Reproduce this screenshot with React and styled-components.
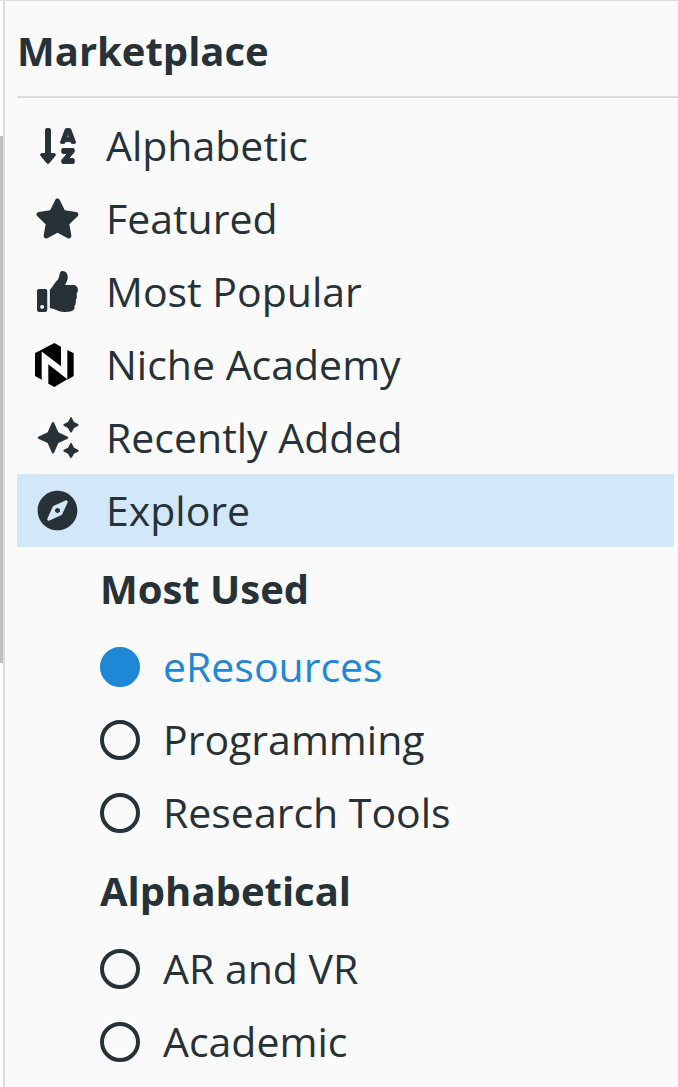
import React, { useState } from 'react'
import styled, { createGlobalStyle, ThemeProvider } from 'styled-components'
import { FaCompass, FaSortAlphaDown, FaStar, FaThumbsUp } from 'react-icons/fa'

const theme = {
    background: '#fafafa',
    text: '#263238',
    accent: '#1e88d6',
    selected: '#d2e7f8',
    border: '#dcdcdc',
    thumb: '#c1c1c1',
}

const GlobalStyle = createGlobalStyle`
    * {
        box-sizing: border-box;
    }
    body {
        margin: 0;
        background-color: ${({ theme }) => theme.background};
        color: ${({ theme }) => theme.text};
        font-family: "Open Sans", "Noto Sans", sans-serif;
        font-size: 41px;
    }
`
const Page = styled.div`
    min-height: 100vh;
    display: flex;
    border-top: 1px solid ${({ theme }) => theme.border};
`
const ScrollGutter = styled.div`
    width: 3px;
    padding-top: 135px;
    flex-shrink: 0;
    background-color: white;
`
const ScrollThumb = styled.div`
    height: 527px;
    background-color: ${({ theme }) => theme.thumb};
`
const Sidebar = styled.aside`
    flex: 1;
    min-width: 0;
    padding-left: 12px;
    border-left: 2px solid ${({ theme }) => theme.border};
`
const Title = styled.h1`
    margin: 0 0 11px;
    padding: 20px 0 15px;
    border-bottom: 2px solid ${({ theme }) => theme.border};
    font-size: 40px;
    font-weight: 700;
    line-height: 60px;
`
const Menu = styled.nav`
    display: flex;
    flex-direction: column;
    margin-right: 4px;
`
const MenuLink = styled.a`
    height: 73px;
    padding-left: 18px;
    display: flex;
    align-items: center;
    gap: 26px;
    color: inherit;
    text-decoration: none;
    background-color: ${({ theme, $active }) => $active ? theme.selected : 'transparent'};
`
const MenuIcon = styled.span`
    width: 45px;
    display: flex;
    justify-content: center;
    flex-shrink: 0;
    svg {
        display: block;
    }
`
const ItemText = styled.span`
    padding-bottom: 2px;
`
const Filters = styled.form`
    padding-left: 83px;
`
const FilterGroup = styled.fieldset`
    margin: 0;
    padding: 0;
    border: 0;
    min-width: 0;
`
const FilterTitle = styled.legend`
    padding: 0;
    font-size: 40px;
    font-weight: 700;
    line-height: 83px;
`
const FilterOption = styled.label`
    height: 73px;
    display: flex;
    align-items: center;
    gap: 23px;
    cursor: pointer;
    color: ${({ theme, $checked }) => $checked ? theme.accent : theme.text};
`
const Radio = styled.input`
    appearance: none;
    width: 40px;
    height: 40px;
    margin: 0;
    flex-shrink: 0;
    border: 4px solid ${({ theme }) => theme.text};
    border-radius: 50%;
    cursor: pointer;
    &:checked {
        border-color: ${({ theme }) => theme.accent};
        background-color: ${({ theme }) => theme.accent};
    }
`

const NicheLogo = () => (
    <svg width="45" height="44" viewBox="0 0 135 132" aria-hidden="true">
        <path d="M0 30 20 20V110L0 99Z" />
        <path d="M18 21 58 0 78 11V70L18 24Z" />
        <path d="M97 21 116 31V99L97 110Z" />
        <path d="M40 64 97 109 58 132 40 122Z" />
    </svg>
)

const Sparkles = () => (
    <svg width="42" height="42" viewBox="0 0 126 126" fill="currentColor" aria-hidden="true">
        <path d="M48 15Q50 15 52 19L64 46 92 59Q96 62 92 65L64 78 52 106Q48 113 44 106L32 78 4 65Q0 62 4 59L32 46 44 19Q46 15 48 15Z" />
        <path d="M102 0Q104 0 105 4L111 15 123 21Q127 24 123 27L111 33 105 44Q102 49 99 44L93 33 81 27Q77 24 81 21L93 15 99 4Q100 0 102 0Z" />
        <path d="M102 77Q104 77 105 81L111 92 123 98Q127 101 123 104L111 110 105 121Q102 126 99 121L93 110 81 104Q77 101 81 98L93 92 99 81Q100 77 102 77Z" />
    </svg>
)

const menuItems = [
    { name: 'Alphabetic', icon: <FaSortAlphaDown size={40} stroke="currentColor" strokeWidth={12} /> },
    { name: 'Featured', icon: <FaStar size={45} /> },
    { name: 'Most Popular', icon: <FaThumbsUp size={41} /> },
    { name: 'Niche Academy', icon: <NicheLogo /> },
    { name: 'Recently Added', icon: <Sparkles /> },
    { name: 'Explore', icon: <FaCompass size={41} /> },
]

const filterGroups = [
    { title: 'Most Used', options: ['eResources', 'Programming', 'Research Tools'] },
    { title: 'Alphabetical', options: ['AR and VR', 'Academic'] },
]

export default function App() {
    const [active, setActive] = useState('Explore')
    const [category, setCategory] = useState('eResources')

    const handleMenu = (e, name) => {
        e.preventDefault()
        setActive(name)
    }

    return (
        <ThemeProvider theme={theme}>
            <GlobalStyle />
            <Page>
                <ScrollGutter>
                    <ScrollThumb />
                </ScrollGutter>
                <Sidebar>
                    <Title>Marketplace</Title>
                    <Menu>
                        {menuItems.map(({ name, icon }) => (
                            <MenuLink key={name} href="#" $active={active === name} onClick={(e) => handleMenu(e, name)}>
                                <MenuIcon>{icon}</MenuIcon>
                                <ItemText>{name}</ItemText>
                            </MenuLink>
                        ))}
                    </Menu>
                    <Filters>
                        {filterGroups.map(({ title, options }) => (
                            <FilterGroup key={title}>
                                <FilterTitle>{title}</FilterTitle>
                                {options.map((option) => (
                                    <FilterOption key={option} $checked={category === option}>
                                        <Radio
                                            type="radio"
                                            name="category"
                                            value={option}
                                            checked={category === option}
                                            onChange={() => setCategory(option)}
                                        />
                                        <ItemText>{option}</ItemText>
                                    </FilterOption>
                                ))}
                            </FilterGroup>
                        ))}
                    </Filters>
                </Sidebar>
            </Page>
        </ThemeProvider>
    )
}
